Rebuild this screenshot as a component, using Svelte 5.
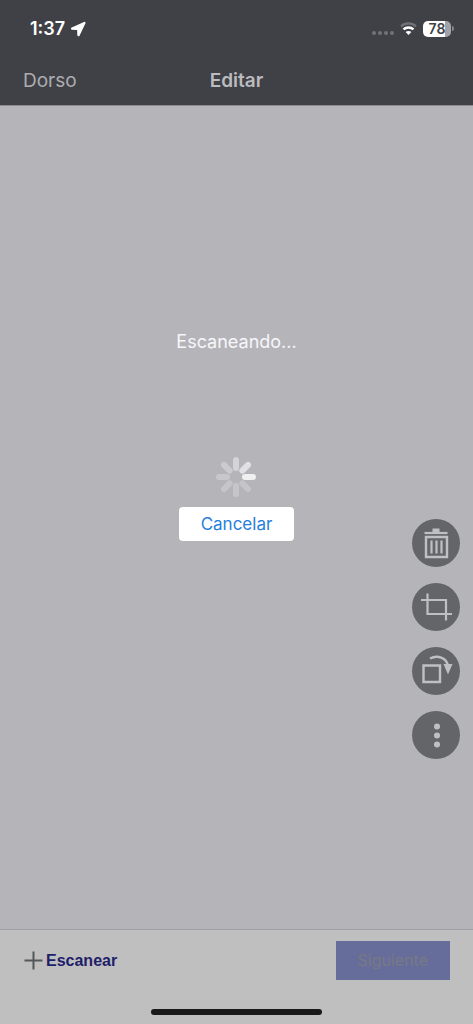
<script>
  const spokes = [
    { angle: 0, opacity: 0.42 },
    { angle: 45, opacity: 0.6 },
    { angle: 90, opacity: 0.8 },
    { angle: 135, opacity: 0.22 },
    { angle: 180, opacity: 0.24 },
    { angle: 225, opacity: 0.24 },
    { angle: 270, opacity: 0.26 },
    { angle: 315, opacity: 0.3 }
  ]

  let scanning = $state(true)
</script>

<div class="screen">
  <header>
    <div class="status">
      <div class="status-group">
        <span class="time">1:37</span>
        <svg width="16" height="16" viewBox="0 0 16 16" aria-hidden="true">
          <path d="M14.300 1.500 2 7c-.8.4-.6 1.200.2 1.200l5.600.2.1 5.600c0 .8.900.9 1.200.2L14.900 2c.2-.5-.1-.7-.6-.5z" fill="#fff" stroke="#fff" stroke-width="1.200" stroke-linejoin="round" />
        </svg>
      </div>
      <div class="status-group status-group--right">
        <svg width="22" height="12" viewBox="0 0 22 12" aria-hidden="true">
          <g fill="#717277">
            <circle cx="2" cy="10" r="2" />
            <circle cx="8" cy="10" r="2" />
            <circle cx="14" cy="10" r="2" />
            <circle cx="20" cy="10" r="2" />
          </g>
        </svg>
        <svg width="17" height="13" viewBox="0 0 17 13" fill="none" aria-hidden="true">
          <path d="M1 4.400C5.200.4 11.800.4 16 4.400" stroke="#717277" stroke-width="2.200" />
          <path d="M3.500 7.400c2.800-2.600 7.200-2.600 10 0" stroke="#fff" stroke-width="2.600" />
          <path d="M8.500 13 5.600 10.100c1.600-1.400 4.200-1.400 5.800 0z" fill="#fff" />
        </svg>
        <div class="battery-wrap">
          <span class="battery">78</span>
          <span class="battery-tip"></span>
        </div>
      </div>
    </div>
    <nav>
      <a href="#dorso">Dorso</a>
      <h1>Editar</h1>
    </nav>
  </header>

  <main>
    {#if scanning}
      <div class="progress" role="status">
        <p>Escaneando...</p>
        <svg class="spinner" width="42" height="40" viewBox="-20 -20 42 40" aria-hidden="true">
          {#each spokes as spoke}
            <rect x="-3" y="-20" width="6" height="14" rx="3" fill="#fff" opacity={spoke.opacity} transform="rotate({spoke.angle})" />
          {/each}
        </svg>
        <button class="cancel" type="button" onclick={() => (scanning = false)}>Cancelar</button>
      </div>
    {/if}

    <div class="tools">
      <button type="button" aria-label="Eliminar">
        <svg width="48" height="48" viewBox="0 0 48 48" fill="none" stroke="#bfc0c3" stroke-width="2.200" aria-hidden="true">
          <path d="M12.500 14h23" />
          <path d="M20.500 11.500h7" stroke-width="4" />
          <path d="M14 18h21v20H14z" stroke-width="2.400" />
          <path d="M19.500 21.500v13M24.500 21.500v13M29.500 21.500v13" />
        </svg>
      </button>
      <button type="button" aria-label="Recortar">
        <svg width="48" height="48" viewBox="0 0 48 48" fill="none" stroke="#bfc0c3" stroke-width="2.200" aria-hidden="true">
          <path d="M9 17h25v20.500M15.500 10.500V31h24.500" />
        </svg>
      </button>
      <button type="button" aria-label="Girar">
        <svg width="48" height="48" viewBox="0 0 48 48" fill="none" stroke="#bfc0c3" stroke-width="2.400" aria-hidden="true">
          <path d="M11.500 18.500h16.500V35H11.500z" />
          <path d="M18 11.500c7-3.500 17-1.500 18 8" />
          <path d="M31.500 17h9L36 27.500z" fill="#bfc0c3" stroke="none" />
        </svg>
      </button>
      <button type="button" aria-label="Más opciones">
        <svg width="48" height="48" viewBox="0 0 48 48" fill="#bfc0c3" aria-hidden="true">
          <circle cx="25" cy="15.500" r="3" />
          <circle cx="25" cy="24.500" r="3" />
          <circle cx="25" cy="33.500" r="3" />
        </svg>
      </button>
    </div>
  </main>

  <footer>
    <div class="actions">
      <button class="scan" type="button">
        <svg width="20" height="20" viewBox="0 0 20 20" stroke="#55565a" stroke-width="2" aria-hidden="true">
          <path d="M9.500.5v18M.5 9.500h18" />
        </svg>
        Escanear
      </button>
      <button class="next" type="button" disabled>Siguiente</button>
    </div>
    <div class="home-indicator"></div>
  </footer>
</div>

<style>
  :global(body) {
    margin: 0;
  }

  .screen {
    display: flex;
    flex-direction: column;
    min-height: 100vh;
    font-family: Inter, 'Liberation Sans', sans-serif;
    background: #b5b4b9;
  }

  button {
    padding: 0;
    border: 0;
    font-family: inherit;
    cursor: pointer;
  }

  svg {
    display: block;
    flex: none;
  }

  header {
    background: #404146;
    border-bottom: 1px solid #8b8b90;
  }

  .status {
    display: flex;
    align-items: center;
    justify-content: space-between;
    height: 57px;
    padding: 0 19px 0 30px;
  }

  .status-group {
    display: flex;
    align-items: center;
    gap: 5px;
  }

  .status-group--right {
    gap: 6px;
  }

  .time {
    font-size: 18px;
    font-weight: 600;
    line-height: 24px;
    color: #fff;
  }

  .battery-wrap {
    display: flex;
    align-items: center;
    gap: 1px;
  }

  .battery {
    width: 28px;
    border-radius: 5px;
    font-size: 14px;
    font-weight: 600;
    line-height: 16px;
    text-align: center;
    color: #404146;
    background: linear-gradient(90deg, #fff 78%, #a3a3a7 78%);
  }

  .battery-tip {
    width: 2px;
    height: 5px;
    border-radius: 0 2px 2px 0;
    background: #85868a;
  }

  nav {
    display: grid;
    grid-template-columns: 1fr auto 1fr;
    align-items: center;
    height: 48px;
    padding: 0 23px;
    line-height: 24px;
  }

  nav a {
    font-size: 19px;
    color: #adadb1;
    text-decoration: none;
  }

  h1 {
    margin: 0;
    font-size: 19px;
    font-weight: 600;
    color: #bcbcc0;
  }

  main {
    position: relative;
    flex: 1;
  }

  .progress {
    display: flex;
    flex-direction: column;
    align-items: center;
    padding-top: 224px;
  }

  .progress p {
    margin: 0;
    font-size: 18px;
    line-height: 24px;
    color: #f7f7f9;
  }

  .spinner {
    margin: 103px 0 10px;
  }

  .cancel {
    padding: 0 22px;
    border-radius: 4px;
    font-size: 17px;
    line-height: 34px;
    color: #2680dc;
    background: #fff;
  }

  .tools {
    position: absolute;
    right: 13px;
    bottom: 170px;
    display: grid;
    gap: 16px;
  }

  .tools button {
    width: 48px;
    height: 48px;
    border-radius: 50%;
    background: #646569;
  }

  footer {
    display: flex;
    flex-direction: column;
    align-items: center;
    gap: 29px;
    padding: 11px 0 9px;
    border-top: 1px solid #a0a0a4;
    background: #bfbfbf;
  }

  .actions {
    display: flex;
    align-items: center;
    justify-content: space-between;
    align-self: stretch;
    padding: 0 23px 0 24px;
  }

  .scan {
    display: flex;
    align-items: center;
    gap: 2px;
    font-family: 'Liberation Sans', Arial, sans-serif;
    font-size: 16px;
    font-weight: 700;
    line-height: 24px;
    color: #1e2069;
    background: none;
  }

  .next {
    padding: 0 22px;
    font-size: 16px;
    line-height: 39px;
    color: #777985;
    background: #666d9b;
    cursor: default;
  }

  .home-indicator {
    width: 36%;
    height: 6px;
    border-radius: 3px;
    background: #191919;
  }
</style>
